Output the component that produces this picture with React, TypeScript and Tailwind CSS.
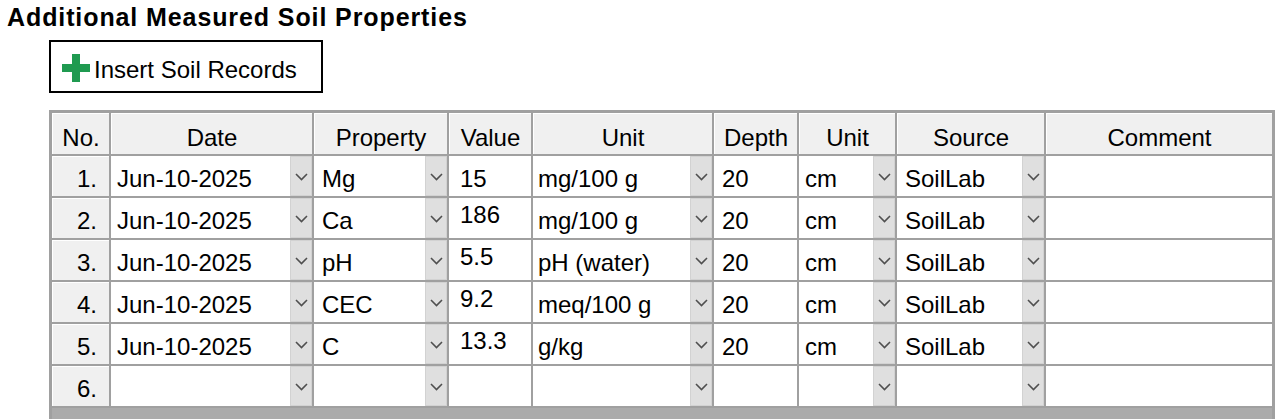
import React from "react";

type SoilRow = {
  date: string;
  property: string;
  value: string;
  unit: string;
  depth: string;
  depthUnit: string;
  source: string;
};

const rows: SoilRow[] = [
  { date: "Jun-10-2025", property: "Mg", value: "15", unit: "mg/100 g", depth: "20", depthUnit: "cm", source: "SoilLab" },
  { date: "Jun-10-2025", property: "Ca", value: "186", unit: "mg/100 g", depth: "20", depthUnit: "cm", source: "SoilLab" },
  { date: "Jun-10-2025", property: "pH", value: "5.5", unit: "pH (water)", depth: "20", depthUnit: "cm", source: "SoilLab" },
  { date: "Jun-10-2025", property: "CEC", value: "9.2", unit: "meq/100 g", depth: "20", depthUnit: "cm", source: "SoilLab" },
  { date: "Jun-10-2025", property: "C", value: "13.3", unit: "g/kg", depth: "20", depthUnit: "cm", source: "SoilLab" },
  { date: "", property: "", value: "", unit: "", depth: "", depthUnit: "", source: "" },
];

const headers = ["No.", "Date", "Property", "Value", "Unit", "Depth", "Unit", "Source", "Comment"];

function Chevron() {
  return (
    <svg width="13" height="8" viewBox="0 0 13 8" className="mt-[2px]">
      <polyline points="1,1 6.5,6.5 12,1" fill="none" stroke="#4f4f4f" strokeWidth="1.6" />
    </svg>
  );
}

function ComboCell({ text, pad }: { text: string; pad: string }) {
  return (
    <div className="h-[40px] bg-white flex">
      <div className={`flex-1 pt-[11px] leading-none whitespace-nowrap ${pad}`}>{text}</div>
      <div className="w-[22px] bg-[#dfdfdf] border border-[#d2d2d2] flex items-center justify-center">
        <Chevron />
      </div>
    </div>
  );
}

function HeaderCell({ label }: { label: string }) {
  return (
    <div className="h-[41px] bg-[#f0f0f0] border-t border-l border-white flex justify-center pt-[12px] leading-none">
      {label}
    </div>
  );
}

export default function App() {
  return (
    <div className="bg-white min-h-[419px] text-black text-[24px] font-['Liberation_Sans',Arial,sans-serif]">
      <div className="pl-[7px] pt-[5px] text-[25px] leading-none font-bold tracking-[0.9px]">
        Additional Measured Soil Properties
      </div>

      <div className="ml-[49px] mt-[10px] w-[274px] h-[53px] border-2 border-black flex items-center pl-[11px] pt-[4px]">
        <svg width="28" height="28" viewBox="0 0 28 28" className="-mt-[2px]">
          <rect x="10" y="0" width="8" height="28" fill="#1f9a50" />
          <rect x="0" y="10" width="28" height="8" fill="#1f9a50" />
        </svg>
        <span className="ml-[4px] leading-none mt-[2px]">Insert Soil Records</span>
      </div>

      <div className="ml-[49px] mt-[17px] w-[1226px] grid grid-cols-[57px_201px_133px_82px_179px_83px_96px_147px_226px] gap-[2px] border-[3px] border-b-0 border-[#a0a0a0] bg-[#a0a0a0]">
        {headers.map((h, i) => (
          <HeaderCell key={i} label={h} />
        ))}

        {rows.map((r, i) => (
          <React.Fragment key={i}>
            <div className="h-[40px] bg-[#f0f0f0] border-t border-l border-white flex justify-end pr-[12px] pt-[10px] leading-none">
              {i + 1}.
            </div>
            <ComboCell text={r.date} pad="pl-[6px]" />
            <ComboCell text={r.property} pad="pl-[8px]" />
            <div className={`h-[40px] bg-white pl-[11px] leading-none ${i === 0 ? "pt-[11px]" : "pt-[5px]"}`}>
              {r.value}
            </div>
            <ComboCell text={r.unit} pad="pl-[5px]" />
            <div className="h-[40px] bg-white pl-[8px] pt-[11px] leading-none">{r.depth}</div>
            <ComboCell text={r.depthUnit} pad="pl-[6px]" />
            <ComboCell text={r.source} pad="pl-[8px]" />
            <div className="h-[40px] bg-white" />
          </React.Fragment>
        ))}

        <div className="col-span-9 h-[30px] bg-[#ababab]" />
      </div>
    </div>
  );
}
